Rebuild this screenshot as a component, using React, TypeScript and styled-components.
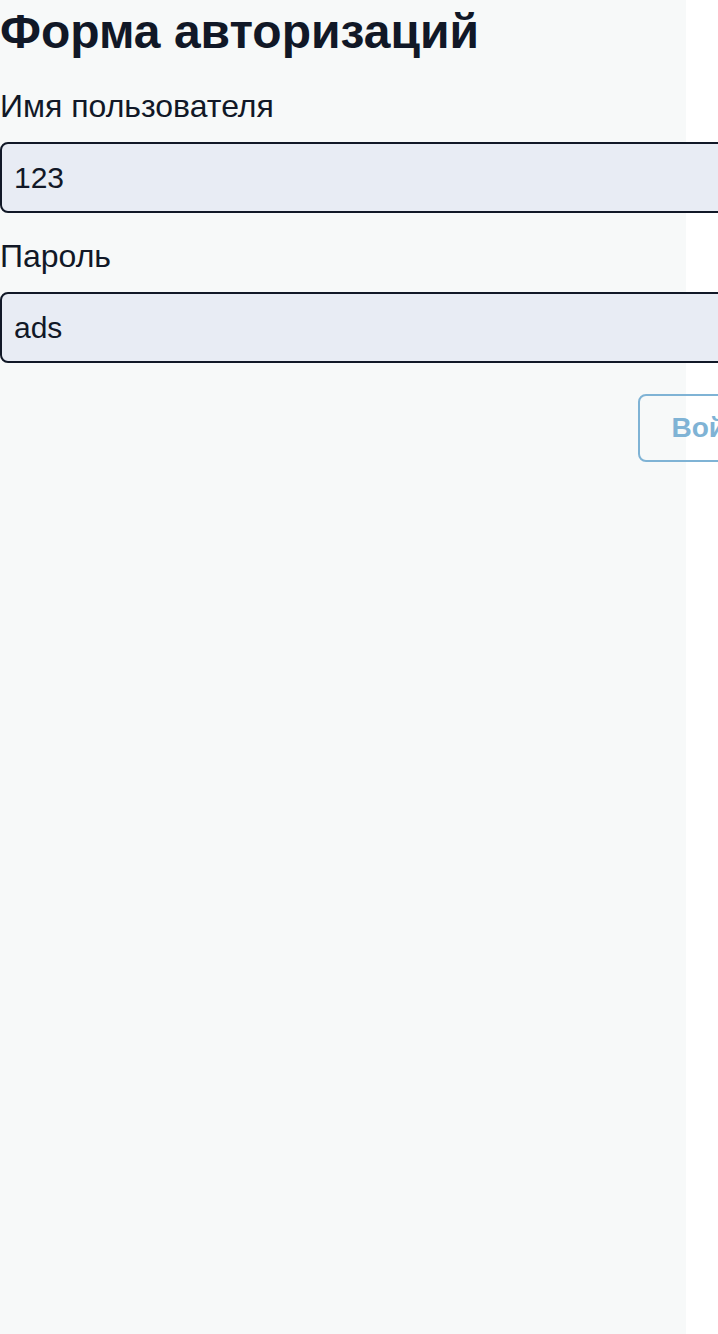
import React from "react";
import styled, { createGlobalStyle } from "styled-components";

const GlobalStyle = createGlobalStyle`
  html, body {
    margin: 0;
    padding: 0;
    background: #ffffff;
    overflow-x: hidden;
  }
  * {
    box-sizing: border-box;
  }
`;

const Page = styled.main`
  width: 686px;
  min-height: 100vh;
  background-color: #f7f9f9;
  font-family: "Liberation Sans", Arial, sans-serif;
  color: #111827;
`;

const Title = styled.h1`
  margin: 0;
  padding-top: 4px;
  font-size: 48px;
  line-height: 56px;
  font-weight: 700;
`;

const Form = styled.form`
  width: 791px;
  display: flex;
  flex-direction: column;
  margin-top: 28px;
`;

const Field = styled.div`
  display: flex;
  flex-direction: column;
  gap: 17px;
  margin-bottom: 25px;
`;

const Label = styled.label`
  font-size: 32px;
  line-height: 37px;
`;

const Input = styled.input`
  width: 100%;
  height: 71px;
  padding: 0 12px;
  border: 2px solid #111827;
  border-radius: 8px;
  background-color: #e8ecf4;
  color: #111827;
  font-family: inherit;
  font-size: 30px;
  outline: none;
`;

const Actions = styled.div`
  display: flex;
  justify-content: flex-end;
  margin-top: 6px;
`;

const Button = styled.button`
  height: 68px;
  padding: 0 32px;
  border: 2px solid #7fb3d5;
  border-radius: 8px;
  background: transparent;
  color: #7fb3d5;
  font-family: inherit;
  font-size: 28px;
  font-weight: 700;
`;

export default function App() {
  return (
    <>
      <GlobalStyle />
      <Page>
        <Title>Форма авторизаций</Title>
        <Form onSubmit={(e) => e.preventDefault()}>
          <Field>
            <Label htmlFor="username">Имя пользователя</Label>
            <Input id="username" defaultValue="123" />
          </Field>
          <Field>
            <Label htmlFor="password">Пароль</Label>
            <Input id="password" type="text" defaultValue="ads" />
          </Field>
          <Actions>
            <Button type="submit" disabled>
              Войти
            </Button>
          </Actions>
        </Form>
      </Page>
    </>
  );
}
